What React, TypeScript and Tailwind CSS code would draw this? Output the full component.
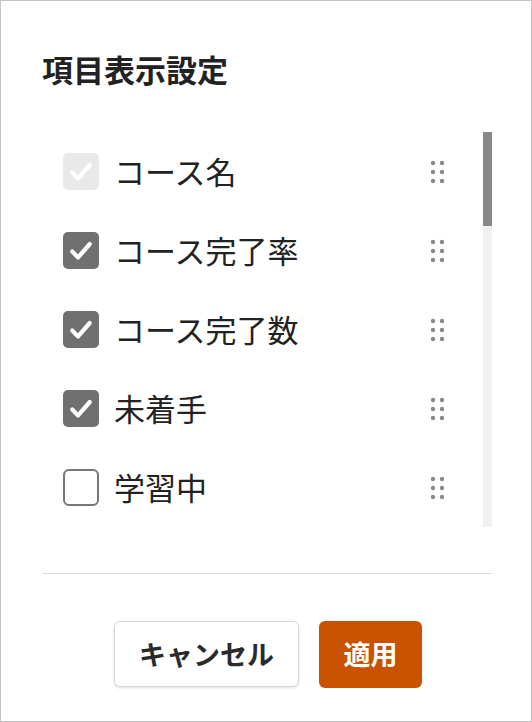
import { useState } from 'react';

type Item = { id: string; label: string; checked: boolean; locked?: boolean };

const initial: Item[] = [
  { id: 'name', label: 'コース名', checked: true, locked: true },
  { id: 'rate', label: 'コース完了率', checked: true },
  { id: 'count', label: 'コース完了数', checked: true },
  { id: 'todo', label: '未着手', checked: true },
  { id: 'doing', label: '学習中', checked: false },
  { id: 'done', label: '完了', checked: false },
  { id: 'users', label: '受講者数', checked: false },
  { id: 'avg', label: '平均点', checked: false },
  { id: 'pass', label: '合格者数', checked: false },
  { id: 'fail', label: '不合格者数', checked: false },
  { id: 'time', label: '学習時間', checked: false },
  { id: 'start', label: '開始日', checked: false },
  { id: 'end', label: '終了日', checked: false },
  { id: 'last', label: '最終学習日', checked: false },
  { id: 'cat', label: 'カテゴリ', checked: false },
  { id: 'owner', label: '作成者', checked: false },
  { id: 'updated', label: '更新日', checked: false },
  { id: 'status', label: 'ステータス', checked: false },
  { id: 'tag', label: 'タグ', checked: false },
  { id: 'memo', label: 'メモ', checked: false },
  { id: 'id', label: 'コースID', checked: false },
];

function Check({ checked, locked, onClick }: { checked: boolean; locked?: boolean; onClick: () => void }) {
  if (!checked) {
    return (
      <button onClick={onClick} className="w-[36px] h-[37px] shrink-0 rounded-[6px] border-2 border-[#777] bg-white" />
    );
  }
  return (
    <button
      onClick={onClick}
      disabled={locked}
      className={`w-[36px] h-[37px] shrink-0 rounded-[5px] flex items-center justify-center ${locked ? 'bg-[#e9e9e9]' : 'bg-[#707070]'}`}
    >
      <svg width="28" height="28" viewBox="0 0 24 24" fill="none">
        <path d="M4.5 12.5l5 5L19.5 6" stroke="white" strokeWidth="3.6" strokeLinecap="round" strokeLinejoin="round" />
      </svg>
    </button>
  );
}

function Grip() {
  return (
    <svg width="16" height="24" viewBox="0 0 16 24" className="shrink-0">
      {[3, 12].map(x => [3, 12, 21].map(y => <circle key={`${x}-${y}`} cx={x} cy={y} r="2.2" fill="#8a8a8a" />))}
    </svg>
  );
}

export default function App() {
  const [items, setItems] = useState<Item[]>(initial);
  const [scroll, setScroll] = useState(0);

  const toggle = (id: string) =>
    setItems(prev => prev.map(i => (i.id === id && !i.locked ? { ...i, checked: !i.checked } : i)));

  const viewH = 395;
  const contentH = items.length * 79;
  const thumbH = Math.round((viewH * viewH) / contentH);
  const thumbTop = Math.round((scroll / (contentH - viewH)) * (viewH - thumbH)) || 0;

  return (
    <div
      className="w-[532px] h-[722px] border border-[#c4c4c4] bg-white flex flex-col pl-[41px] pr-[39px]"
      style={{ fontFamily: '"Noto Sans CJK JP", "Noto Sans", sans-serif' }}
    >
      <h1 className="pt-[45px] text-[31px] leading-[45px] font-bold text-[#222]">項目表示設定</h1>

      {/* list + scrollbar */}
      <div className="mt-[41px] h-[395px] flex">
        <div
          className="flex-1 overflow-y-auto [scrollbar-width:none]"
          onScroll={e => setScroll(e.currentTarget.scrollTop)}
        >
          {items.map(item => (
            <div key={item.id} className="h-[79px] flex items-center pl-[21px] pr-[37px]">
              <Check checked={item.checked} locked={item.locked} onClick={() => toggle(item.id)} />
              <span className="ml-[15px] flex-1 text-[31px] text-[#222] whitespace-nowrap">{item.label}</span>
              <Grip />
            </div>
          ))}
        </div>
        <div className="w-[9px] shrink-0 bg-[#f1f1f1] relative">
          <div className="absolute left-0 right-0 bg-[#888]" style={{ top: thumbTop, height: thumbH }} />
        </div>
      </div>

      <div className="mt-[46px] border-t border-[#dcdcdc]" />

      {/* footer */}
      <div className="mt-[47px] flex justify-center gap-[20px] pl-[2px]">
        <button className="w-[185px] h-[66px] rounded-[6px] border border-[#d6d6d6] bg-white shadow-[0_1px_3px_rgba(0,0,0,0.12)] text-[27px] font-bold text-[#2a2a2a] whitespace-nowrap">
          キャンセル
        </button>
        <button className="w-[103px] h-[67px] rounded-[6px] bg-[#c85200] text-[27px] font-bold text-white whitespace-nowrap">
          適用
        </button>
      </div>
    </div>
  );
}
